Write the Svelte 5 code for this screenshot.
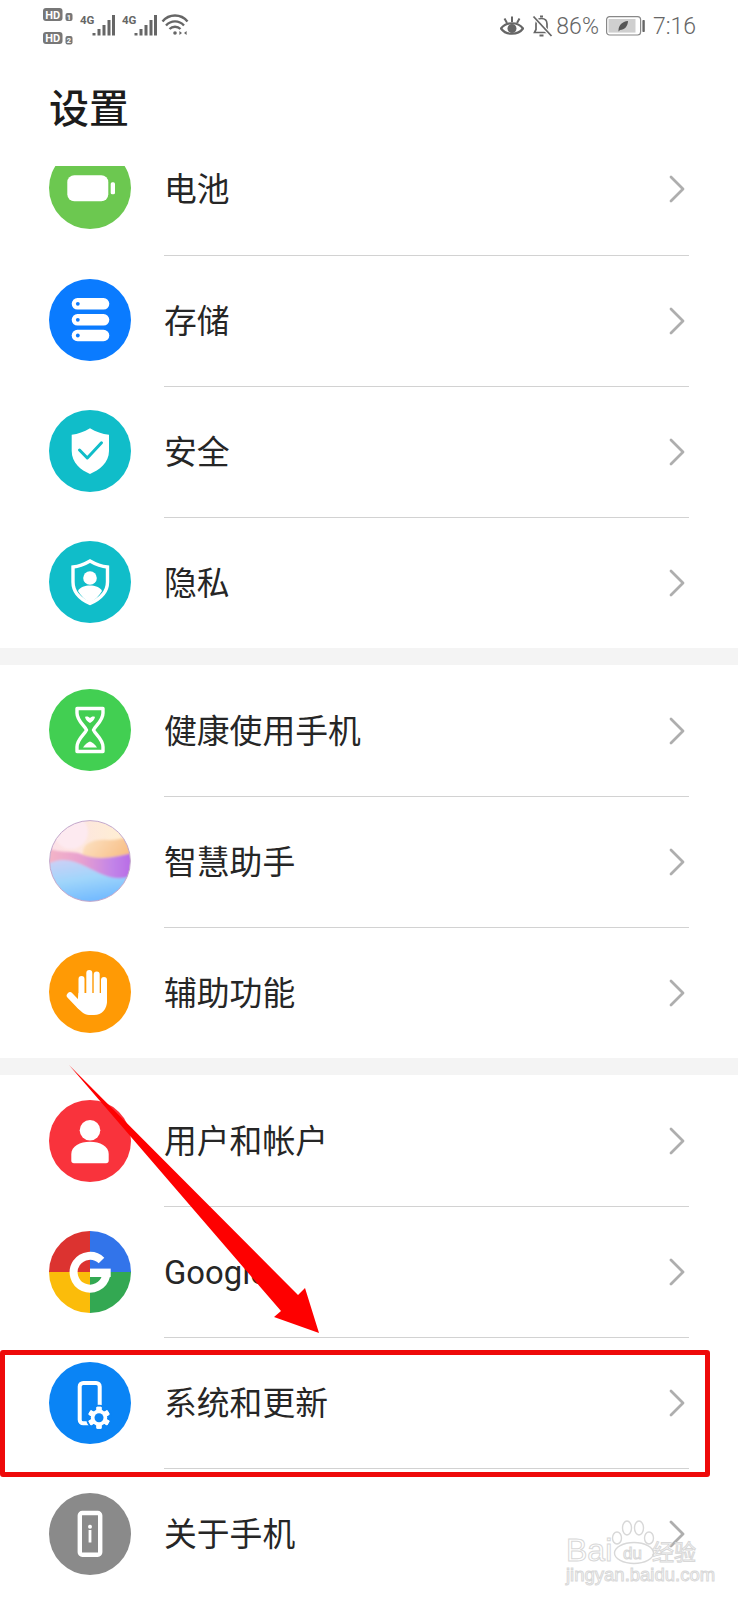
<script>
  const groups = [
    [
      { id: 'battery', label: '电池', color: '#6cc850' },
      { id: 'storage', label: '存储', color: '#0a7bff' },
      { id: 'security', label: '安全', color: '#10bdc9' },
      { id: 'privacy', label: '隐私', color: '#10bdc9' }
    ],
    [
      { id: 'health', label: '健康使用手机', color: '#42cf52' },
      { id: 'assistant', label: '智慧助手', color: 'transparent' },
      { id: 'access', label: '辅助功能', color: '#ff9a05' }
    ],
    [
      { id: 'user', label: '用户和帐户', color: '#f9333c' },
      { id: 'google', label: 'Google', color: 'transparent' },
      { id: 'system', label: '系统和更新', color: '#0a84f5' },
      { id: 'about', label: '关于手机', color: '#8a8a8a' }
    ]
  ];
  const teeth = [0, 60, 120, 180, 240, 300];
  const bars = [
    [0, 33, 2.5],
    [5, 29, 6.5],
    [10, 25, 10.5],
    [15, 20, 15.5],
    [19.5, 15, 20.5]
  ];
</script>

<div class="page">
  <header class="status">
    <svg class="status-left" width="150" height="40" viewBox="43 5 150 40" aria-hidden="true">
      <rect x="43" y="8" width="19.5" height="13" rx="3" fill="#777" />
      <text x="52.7" y="18.6" class="hd">HD</text>
      <rect x="65.5" y="13" width="7" height="8" rx="2" fill="#777" />
      <text x="69" y="20" class="hd hdn">1</text>
      <rect x="43" y="32" width="19.5" height="12" rx="3" fill="#777" />
      <text x="52.7" y="42" class="hd">HD</text>
      <rect x="65.5" y="36" width="7" height="8.5" rx="2" fill="#777" />
      <text x="69" y="43.4" class="hd hdn">2</text>
      {#each [0, 42] as dx}
        <text x={80 + dx} y="24" class="g4">4G</text>
        {#each bars as b}
          <rect x={92.5 + dx + b[0]} y={b[1]} width="3" height={b[2]} fill="#666" />
        {/each}
      {/each}
      <g fill="none" stroke="#666" stroke-width="2.4">
        <path d="M162.5 21.5C169 13.5 181 13.5 187.5 21.5" />
        <path d="M166 25.5C171 20 179 20 184 25.5" />
        <path d="M169.5 29C172.5 26 177.5 26 180.5 29" />
      </g>
      <circle cx="175" cy="33" r="1.8" fill="#666" />
      <path d="M182 33l-2.6-2v4zM184 33l2.6-2v4z" fill="#666" />
    </svg>

    <div class="status-right">
      <svg width="24" height="22" viewBox="0 0 24 22" aria-hidden="true">
        <path d="M1 13.5C6 6.5 18 6.5 23 13.5C18 20.5 6 20.5 1 13.5Z" fill="none" stroke="#666" stroke-width="2.2" />
        <circle cx="12" cy="13.5" r="4.5" fill="#666" />
        <path d="M12 1.5V7M4.5 3.5L7 8M19.5 3.5L17 8" stroke="#666" stroke-width="2" fill="none" />
      </svg>
      <svg class="bell" width="21" height="22" viewBox="0 0 21 22" aria-hidden="true">
        <path d="M2.5 17.5H16.5L15 14.5V9C15 5.5 13 3.5 9.5 3.5C6 3.5 4 5.5 4 9V14.5Z" fill="none" stroke="#666" stroke-width="1.7" />
        <path d="M8 1.5H11M7.5 20.5H11.5" stroke="#666" stroke-width="1.8" />
        <path d="M1.5 1.5L19.5 21" stroke="#fff" stroke-width="4" />
        <path d="M1.5 1.5L19.5 21" stroke="#666" stroke-width="1.8" />
      </svg>
      <span class="pct">86%</span>
      <svg class="batt" width="39" height="20" viewBox="0 0 39 20" aria-hidden="true">
        <rect x="0.6" y="0.6" width="34" height="18.4" rx="3" fill="none" stroke="#888" stroke-width="1.2" />
        <rect x="2.5" y="3" width="27" height="13.6" fill="#cfcfcf" />
        <rect x="36.4" y="4" width="2.4" height="12" rx="0.8" fill="#666" />
        <path d="M12.5 14.5C12.5 9.5 16 5.5 22 5C22 10 18.5 14 14 14L12.5 15.5Z" fill="#555" />
      </svg>
      <span class="time">7:16</span>
    </div>
  </header>

  <h1>设置</h1>

  <main class="list">
    {#each groups as group, gi}
      {#if gi > 0}<div class="sep"></div>{/if}
      {#each group as item, ii}
        <div class="row" class:first={gi === 0 && ii === 0} class:raised={gi < 2}>
          <svg class="icon" width="82" height="82" viewBox="0 0 82 82" aria-hidden="true">
            <circle cx="41" cy="41" r="41" fill={item.color} />
            {#if item.id === 'battery'}
              <rect x="18.3" y="28.3" width="41" height="26" rx="7" fill="#fff" />
              <rect x="61.7" y="35.3" width="4.3" height="12" rx="1.6" fill="#fff" />
            {:else if item.id === 'storage'}
              {#each [19, 35, 50.7] as y}
                <rect x="22.7" {y} width="37.6" height="11.6" rx="5.8" fill="#fff" />
                <circle cx="28.8" cy={y + 5.8} r="1.9" fill="#0a7bff" />
              {/each}
            {:else if item.id === 'security'}
              <path d="M41 18.3C47 22 53 24 60 24.8V41C60 53 50 60 41 64C32 60 22.7 53 22.7 41V24.8C29 24 35 22 41 18.3Z" fill="#fff" />
              <path d="M30.5 40L38.3 48L52.5 32.8" fill="none" stroke="#10bdc9" stroke-width="3" stroke-linecap="round" stroke-linejoin="round" />
            {:else if item.id === 'privacy'}
              <path d="M41 20C47 23.5 52.5 25.5 58.5 26V41C58.5 52 50 58.5 41 62.5C32 58.5 24 52 24 41V26C29.5 25.5 35 23.5 41 20Z" fill="none" stroke="#fff" stroke-width="3.4" />
              <circle cx="41" cy="37" r="6.8" fill="#fff" />
              <path d="M29 50C31 46 36 44.5 41 44.5S51 46 53 50C50 55 46 59 41 61.5C36 59 32 55 29 50Z" fill="#fff" />
            {:else if item.id === 'health'}
              <path d="M28 19.5H54V24C54 32 46 37 44.5 41C46 45 54 50 54 58V62.5H28V58C28 50 36 45 37.5 41C36 37 28 32 28 24Z" fill="none" stroke="#fff" stroke-width="3.4" stroke-linejoin="round" />
              <path d="M36 28C38 27 40 28 41 29C42 28 44 27 46 28C45.5 31 43 33 41 34C39 33 36.5 31 36 28Z" fill="#fff" />
              <path d="M34 58.5C36 55 39 53 41 52.5C43 53 46 55 48 58.5Z" fill="#fff" />
            {:else if item.id === 'assistant'}
              <defs>
                <clipPath id="orb"><circle cx="41" cy="41" r="40.3" /></clipPath>
                <filter id="soft" x="-10%" y="-10%" width="120%" height="120%"><feGaussianBlur stdDeviation="1.2" /></filter>
                <linearGradient id="orbBase" x1="0" y1="0" x2="1" y2="0">
                  <stop offset="0" stop-color="#fce0e8" />
                  <stop offset="1" stop-color="#fff0d0" />
                </linearGradient>
                <linearGradient id="orbPeach" x1="0" y1="0" x2="1" y2="0.5">
                  <stop offset="0" stop-color="#fde7cc" />
                  <stop offset="1" stop-color="#f7bb80" />
                </linearGradient>
                <linearGradient id="orbBand" x1="0" y1="0" x2="1" y2="0">
                  <stop offset="0" stop-color="#f5b7c6" />
                  <stop offset="0.4" stop-color="#e8a0cf" />
                  <stop offset="0.75" stop-color="#c284e8" />
                  <stop offset="1" stop-color="#b668e6" />
                </linearGradient>
                <linearGradient id="orbBlue" x1="0" y1="0" x2="0.3" y2="1">
                  <stop offset="0" stop-color="#cfd0f6" />
                  <stop offset="0.5" stop-color="#9fd5fb" />
                  <stop offset="1" stop-color="#6fb8ff" />
                </linearGradient>
              </defs>
              <g clip-path="url(#orb)">
                <rect width="82" height="82" fill="url(#orbBase)" />
                <g filter="url(#soft)">
                  <circle cx="22" cy="12" r="17" fill="#fdeaf0" />
                  <path d="M34 32C34 24 44 19 58 20C68 20 78 18 86 14V50H30Z" fill="url(#orbPeach)" />
                  <path d="M-4 26C6 34 22 30 32 34C48 41 66 38 86 32V66H-4Z" fill="url(#orbBand)" />
                  <path d="M-4 46C10 36 24 40 38 47C52 54 68 64 86 54V86H-4Z" fill="url(#orbBlue)" />
                </g>
              </g>
              <circle cx="41" cy="41" r="40.4" fill="none" stroke="#c3a8cc" stroke-width="1" />
            {:else if item.id === 'access'}
              <g stroke="#fff" stroke-width="6" stroke-linecap="round">
                <path d="M32.5 28V50M40.3 22V46M47.7 23.5V46M55 29V50" />
                <path d="M21 44.5L31 55" stroke-width="6.5" />
              </g>
              <path d="M29.5 42H58V50C58 58 53 64 45 64H40C35 64 31.5 60 28 56Z" fill="#fff" />
            {:else if item.id === 'user'}
              <circle cx="41" cy="30.3" r="10.3" fill="#fff" />
              <path d="M22.3 54C22.3 46 31 41.7 41 41.7S59.7 46 59.7 54V60.5Q59.7 63.3 57 63.3H25Q22.3 63.3 22.3 60.5Z" fill="#fff" />
            {:else if item.id === 'google'}
              <defs><clipPath id="gc"><circle cx="41" cy="41" r="41" /></clipPath></defs>
              <g clip-path="url(#gc)">
                <rect width="41" height="41" fill="#dc3330" />
                <rect x="41" width="41" height="41" fill="#3274ea" />
                <rect y="41" width="41" height="41" fill="#fbbc0a" />
                <rect x="41" y="41" width="41" height="41" fill="#33a852" />
              </g>
              <path d="M52.5 29.5A16.4 16.4 0 1 0 57 45" fill="none" stroke="#fff" stroke-width="8" />
              <rect x="41" y="37.6" width="20.7" height="8.4" fill="#fff" />
            {:else if item.id === 'system'}
              <rect x="30.7" y="21" width="20" height="40.3" rx="3.5" fill="none" stroke="#fff" stroke-width="4" />
              <circle cx="50" cy="55.7" r="13" fill={item.color} />
              {#each teeth as t}
                <rect x="47.4" y="44.7" width="5.2" height="22" rx="1" fill="#fff" transform="rotate({t} 50 55.7)" />
              {/each}
              <circle cx="50" cy="55.7" r="8.2" fill="#fff" />
              <circle cx="50" cy="55.7" r="4.5" fill={item.color} />
            {:else if item.id === 'about'}
              <rect x="30.8" y="20" width="20.4" height="41.7" rx="2.5" fill="none" stroke="#fff" stroke-width="4.4" />
              <circle cx="41" cy="33.7" r="2" fill="#fff" />
              <rect x="39.6" y="37" width="2.8" height="12.5" fill="#fff" />
            {/if}
          </svg>
          <div class="body" class:last={ii === group.length - 1}>
            <span class="label">{item.label}</span>
            <svg class="chev" width="16" height="28" viewBox="0 0 16 28" aria-hidden="true">
              <path d="M2 2L14 14L2 26" fill="none" stroke="#aeaeae" stroke-width="2.8" stroke-linecap="round" stroke-linejoin="round" />
            </svg>
          </div>
        </div>
      {/each}
    {/each}
  </main>

  <div class="highlight"></div>

  <svg class="arrow" width="738" height="1600" viewBox="0 0 738 1600" aria-hidden="true">
    <polygon points="69,1065 298,1295 305,1288 319,1333 274,1317 281,1311" fill="#fe0000" />
  </svg>

  <div class="watermark" aria-hidden="true">
    <span class="bai">Bai</span>
    <svg class="paw" width="48" height="47" viewBox="0 0 48 47">
      <g fill="#fff" stroke="#d8d8d8" stroke-width="1.4">
        <ellipse cx="7" cy="20" rx="4.5" ry="6" />
        <ellipse cx="17" cy="10" rx="4.5" ry="7" />
        <ellipse cx="29" cy="10" rx="4.5" ry="7" />
        <ellipse cx="39" cy="20" rx="4.5" ry="6" />
        <ellipse cx="24" cy="35" rx="19.5" ry="10.5" />
      </g>
    </svg>
    <span class="du">du</span>
    <span class="jy">经验</span>
    <span class="url">jingyan.baidu.com</span>
  </div>
</div>

<style>
  :global(body) {
    margin: 0;
    background: #fff;
  }
  .page {
    position: relative;
    width: 738px;
    height: 1600px;
    overflow: hidden;
    background: #fff;
    font-family: "Noto Sans CJK SC", "Noto Sans", sans-serif;
    color: #222;
  }
  .status {
    display: flex;
    justify-content: space-between;
    align-items: flex-start;
    height: 50px;
    padding: 5px 43px 0;
    box-sizing: border-box;
  }
  .status-left {
    display: block;
  }
  .status-left .hd {
    font-family: "Roboto", sans-serif;
    font-size: 11px;
    font-weight: 700;
    text-anchor: middle;
    fill: #fff;
  }
  .status-left .hdn {
    font-size: 7.5px;
  }
  .status-left .g4 {
    font-family: "Roboto", sans-serif;
    font-size: 11.5px;
    font-weight: 700;
    fill: #666;
    text-anchor: start;
  }
  .status-right {
    display: flex;
    align-items: center;
    height: 42px;
    color: #666;
    font-family: "Roboto", sans-serif;
    font-size: 23px;
    font-weight: 300;
    margin-right: -1px;
  }
  .bell {
    margin-left: 8px;
  }
  .pct {
    margin-left: 3px;
  }
  .batt {
    margin-left: 7px;
  }
  .time {
    margin-left: 8px;
  }
  h1 {
    margin: 0;
    height: 116px;
    padding: 32px 0 0 49px;
    box-sizing: border-box;
    font-size: 40px;
    line-height: 48px;
    font-weight: 500;
    color: #1c1c1c;
  }
  .list {
    height: 1434px;
    overflow: hidden;
  }
  .sep {
    height: 17px;
    background: #f4f4f4;
  }
  .row {
    display: flex;
    align-items: center;
    height: 131px;
    padding-left: 49px;
    box-sizing: border-box;
  }
  .row.first {
    height: 134px;
    margin-top: -45px;
  }
  .first .chev {
    margin-top: 2px;
  }
  .icon {
    flex: none;
    display: block;
  }
  .raised .icon {
    margin-bottom: 1px;
  }
  .body {
    flex: 1;
    align-self: stretch;
    display: flex;
    align-items: center;
    justify-content: space-between;
    margin: 0 49px -1px 33px;
    padding-right: 4px;
    border-bottom: 1px solid #d2d2d2;
  }
  .body.last {
    border-bottom-color: transparent;
  }
  .label {
    font-family: "Roboto", "Noto Sans CJK SC", sans-serif;
    font-size: 32.8px;
    line-height: 40px;
    margin-top: 3px;
    color: #262626;
  }
  .chev {
    display: block;
  }
  .highlight {
    position: absolute;
    left: 0;
    top: 1350px;
    width: 710px;
    height: 127px;
    box-sizing: border-box;
    border: 5px solid #ee0a0a;
    border-radius: 3px;
  }
  .arrow {
    position: absolute;
    left: 0;
    top: 0;
    pointer-events: none;
  }
  .watermark {
    position: absolute;
    left: 565px;
    top: 1518px;
    width: 136px;
    height: 68px;
    color: transparent;
    -webkit-text-stroke: 1px #d8d8d8;
  }
  .watermark span {
    position: absolute;
    white-space: nowrap;
    font-family: "Liberation Sans", sans-serif;
  }
  .bai {
    left: 1px;
    top: 18px;
    font-size: 32px;
    line-height: 28px;
  }
  .paw {
    position: absolute;
    left: 45px;
    top: 0;
  }
  .du {
    left: 58px;
    top: 27px;
    font-size: 17px;
    line-height: 18px;
  }
  .watermark .jy {
    left: 87px;
    top: 19px;
    font-family: "Noto Sans CJK SC", sans-serif;
    font-size: 22px;
    line-height: 26px;
  }
  .url {
    left: 1px;
    top: 47px;
    font-size: 18.5px;
    line-height: 20px;
  }
</style>
